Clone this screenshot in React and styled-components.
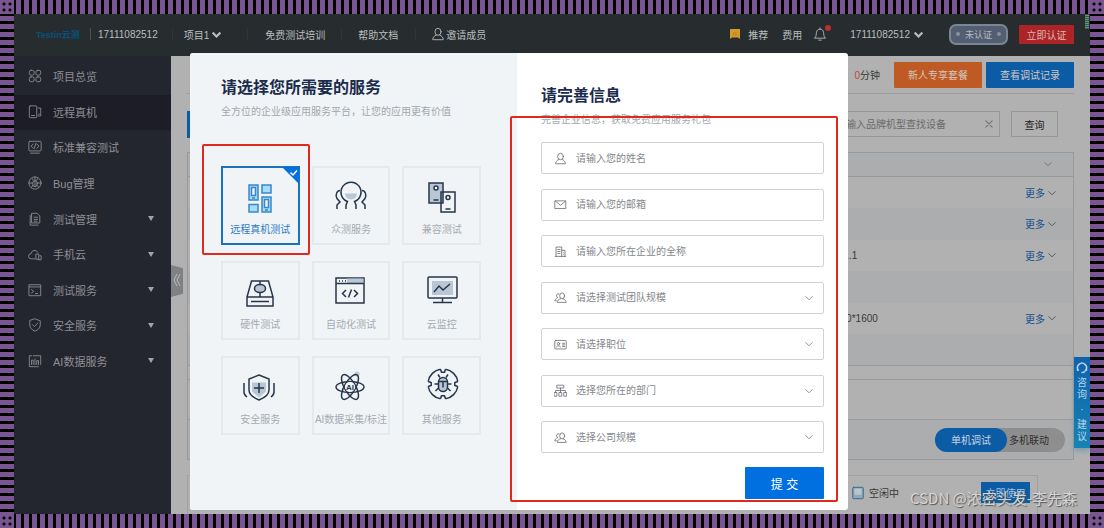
import React, { useState } from 'react'
import styled, { createGlobalStyle, css } from 'styled-components'

const primary = '#006fe0'
const navy = '#1b2b4b'
const annotation = '#e0281e'
const purple = '#7b5592'

const GlobalStyle = createGlobalStyle`
  * {
    box-sizing: border-box;
  }
  body {
    margin: 0;
    background: #000;
    font-family: "Liberation Sans", "Noto Sans CJK SC", sans-serif;
    font-size: 10px;
  }
  button, input, select {
    font-family: inherit;
    font-size: inherit;
  }
  a {
    color: inherit;
    text-decoration: none;
  }
`

const Frame = styled.div`
  position: relative;
  min-height: 100vh;
  padding: 14px;
  display: flex;
  background:
    repeating-linear-gradient(90deg, ${purple} 0 5px, #000 5px 8px) top / 100% 14px no-repeat,
    repeating-linear-gradient(90deg, ${purple} 0 5px, #000 5px 8px) bottom / 100% 14px no-repeat,
    repeating-linear-gradient(180deg, ${purple} 0 5px, #000 5px 8px);
`

const Corner = styled.span`
  position: absolute;
  width: 14px;
  height: 14px;
  ${props => props.$bottom ? 'bottom: 0;' : 'top: 0;'}
  ${props => props.$right ? 'right: 0;' : 'left: 0;'}
  background: radial-gradient(circle, #000 0 1px, transparent 2px) 1px 1px / 6px 6px ${purple};
`

const Page = styled.div`
  position: relative;
  flex: 1;
  min-width: 0;
  display: flex;
  flex-direction: column;
  overflow: hidden;
  background: #b1b1b1;
`

/* header */

const Header = styled.header`
  height: 42px;
  padding: 0 16px 0 22px;
  display: flex;
  justify-content: space-between;
  background: #272d2f;
  color: #b9bdbf;
`

const HeaderGroup = styled.div`
  display: flex;
  align-items: center;
  height: 40px;
`

const Logo = styled.a`
  width: 54px;
  color: #07507e;
  font-size: 9px;
  font-weight: bold;
`

const Divider = styled.span`
  width: 1px;
  height: 12px;
  background: ${props => props.$strong ? '#4b5153' : '#303638'};
`

const HeaderLink = styled.a`
  display: inline-flex;
  align-items: center;
  gap: ${props => props.$gap || 0}px;
  margin-left: ${props => props.$before || 0}px;
  margin-right: ${props => props.$after || 0}px;
  white-space: nowrap;
`

const Bell = styled.span`
  position: relative;
  display: flex;
`

const BellDot = styled.span`
  position: absolute;
  top: -2px;
  right: -4px;
  width: 6px;
  height: 6px;
  border-radius: 50%;
  background: #b7312f;
`

const Unverified = styled.span`
  display: flex;
  align-items: center;
  justify-content: space-between;
  width: 59px;
  height: 21px;
  margin-right: 11px;
  padding: 0 5px;
  border: 2px solid #7c8594;
  border-radius: 7px;
  background: #535e73;
  color: #b6bac2;
  font-size: 9px;
  &::before, &::after {
    content: '';
    width: 4px;
    height: 4px;
    border-radius: 50%;
    background: #8790a2;
  }
`

const VerifyButton = styled.button`
  width: 55px;
  height: 19px;
  padding: 0;
  border: 0;
  border-radius: 1px;
  background: #ad2427;
  color: #d9b5b5;
  cursor: pointer;
`

/* sidebar */

const Body = styled.div`
  flex: 1;
  display: flex;
`

const Sidebar = styled.nav`
  position: relative;
  width: 157px;
  flex: none;
  padding-top: 3px;
  background: #24262f;
`

const Menu = styled.ul`
  display: flex;
  flex-direction: column;
  height: 320px;
  margin: 0;
  padding: 0;
  list-style: none;
`

const MenuItem = styled.li`
  flex: 1;
  display: flex;
  background: ${props => props.$active ? '#1c1d26' : 'transparent'};
`

const MenuLink = styled.a`
  flex: 1;
  display: flex;
  align-items: center;
  gap: 11px;
  padding: 0 17px 1px 14px;
  color: #8d8e94;
  font-size: 11px;
`

const MenuLabel = styled.span`
  flex: 1;
`

const Caret = styled.span`
  border: 3px solid transparent;
  border-top: 5px solid #a2a3a7;
  border-bottom: 0;
`

const Collapse = styled.button`
  position: absolute;
  left: 157px;
  top: 209px;
  width: 12px;
  height: 32px;
  padding: 0;
  border: 0;
  background: #808184;
  clip-path: polygon(0 0, 100% 10%, 100% 90%, 0 100%);
  color: #b9babb;
  cursor: pointer;
`

/* dimmed page behind the dialog */

const Main = styled.main`
  flex: 1;
  min-width: 0;
  padding: 0 16px;
  display: flex;
  flex-direction: column;
  color: #38393b;
`

const TopBar = styled.div`
  display: flex;
  align-items: center;
  justify-content: flex-end;
  gap: 4px;
  height: 38px;
  border-bottom: 1px solid #9c9c9c;
`

const Remaining = styled.span`
  margin-right: 10px;
  b {
    color: #b84a35;
    font-weight: normal;
  }
`

const ActionButton = styled.button`
  width: 88px;
  height: 26px;
  padding: 0;
  border: 0;
  border-radius: 1px;
  background: ${props => props.$orange ? '#c05a24' : '#0c5ca5'};
  color: #d3c6bf;
  cursor: pointer;
`

const SearchRow = styled.div`
  display: flex;
  align-items: center;
  gap: 11px;
  height: 58px;
  padding: 2px 16px 0 0;
`

const DeviceTab = styled.button`
  width: 70px;
  height: 27px;
  margin-right: auto;
  border: 0;
  background: #0c5ca5;
`

const SearchBox = styled.div`
  display: flex;
  align-items: center;
  width: 172px;
  height: 26px;
  padding: 0 5px;
  border: 1px solid #979797;
  color: #777;
`

const SearchInput = styled.input`
  flex: 1;
  min-width: 0;
  border: 0;
  outline: none;
  background: transparent;
  &::placeholder {
    color: #6a6a6a;
    opacity: 1;
  }
`

const QueryButton = styled.button`
  width: 47px;
  height: 26px;
  padding: 0;
  border: 1px solid #979797;
  background: transparent;
  color: #222;
`

const FilterTable = styled.table`
  width: 100%;
  height: 214px;
  border: 1px solid #999;
  border-collapse: collapse;
  th, td {
    height: 31px;
    padding: 0 17px 0 0;
    font-weight: normal;
    text-align: right;
  }
  th {
    height: 24px;
    padding-right: 21px;
    border-bottom: 1px solid #999;
    background: #acadaf;
    color: #777;
  }
  td:first-child {
    padding: 0 0 0 647px;
    text-align: left;
    white-space: nowrap;
  }
  tbody tr:nth-child(even) {
    background: #acadaf;
  }
`

const More = styled.a`
  display: inline-flex;
  align-items: center;
  gap: 3px;
  color: #17528f;
`

const Strip = styled.div`
  display: flex;
  align-items: center;
  justify-content: flex-end;
  height: ${props => props.$height}px;
  padding-right: 8px;
  border: 1px solid #999;
  border-top: 0;
  background: ${props => props.$shade ? '#acadaf' : 'transparent'};
`

const ModeSwitch = styled.div`
  display: flex;
  border-radius: 12px;
  background: #8e8e8e;
`

const ModeButton = styled.button`
  width: ${props => props.$on ? 72 : 58}px;
  height: 24px;
  padding: 0 0 0 ${props => props.$on ? 0 : 2}px;
  border: 0;
  border-radius: 12px;
  background: ${props => props.$on ? '#0c5ca5' : 'transparent'};
  color: ${props => props.$on ? '#c5d4e2' : '#2f2f2f'};
  text-align: ${props => props.$on ? 'center' : 'left'};
`

const DeviceCard = styled.div`
  flex: 1;
  display: flex;
  align-items: center;
  justify-content: flex-end;
  gap: 4px;
  margin: 15px 36px 0 0;
  padding: 0 7px 5px 0;
  border: 1px solid #a1a1a1;
  border-bottom: 0;
`

const UseButton = styled.button`
  width: 49px;
  height: 21px;
  margin-left: 78px;
  padding: 0;
  border: 0;
  background: #0c5ca5;
  color: #a8c1da;
`

const Consult = styled.button`
  position: absolute;
  top: 343px;
  right: 0;
  width: 16px;
  height: 91px;
  padding: 5px 0;
  display: flex;
  flex-direction: column;
  align-items: center;
  justify-content: space-between;
  border: 0;
  background: linear-gradient(#0e62ac, #1583b5);
  box-shadow: 0 3px 5px #7f9cae;
  color: #b9d2e6;
  font-size: 10px;
  line-height: 12px;
`

const Watermark = styled.span`
  position: absolute;
  right: 13px;
  bottom: 5px;
  color: #d4d4d4;
  font-family: "Noto Sans CJK SC", sans-serif;
  font-size: 15px;
  line-height: 22px;
  text-shadow: 1px 1px 1px #555;
`

const Signal = styled.span`
  position: absolute;
  top: 0;
  right: 1px;
  width: 4px;
  height: 15px;
  background: repeating-linear-gradient(#315c4b 0 1px, #69907e 1px 2px);
`

/* dialog */

const Overlay = styled.div`
  position: absolute;
  inset: 39px 242px 4px 176px;
  display: flex;
`

const Dialog = styled.section`
  flex: 1;
  display: flex;
  border-radius: 3px;
  background: #fff;
  overflow: hidden;
`

const Services = styled.div`
  flex: 1;
  padding: 23px 36px 0 31px;
  background: #f0f4f7;
`

const Title = styled.h2`
  margin: 0;
  color: ${navy};
  font-size: 16px;
  line-height: 24px;
  white-space: nowrap;
`

const Subtitle = styled.p`
  margin: 0;
  color: #a3a7ac;
  font-size: 10px;
  line-height: 24px;
`

const ServiceGrid = styled.div`
  display: grid;
  grid-template-columns: repeat(3, 1fr);
  gap: 16px 12px;
  margin-top: 42px;
`

const cardStyles = css`
  position: relative;
  display: flex;
  flex-direction: column;
  align-items: center;
  height: 79px;
  padding: 12px 0 0;
  background: transparent;
  cursor: pointer;
`

const ServiceCard = styled.button`
  ${cardStyles}
  gap: 7px;
  border: 2px solid ${props => props.$selected ? '#1973bd' : '#e5e9ec'};
  color: ${props => props.$selected ? '#2f7cc4' : '#a6abb1'};
  white-space: nowrap;
  line-height: 14px;
`

const ServiceIcon = styled.svg`
  width: 36px;
  height: 36px;
  overflow: visible;
  color: #27364a;
`

const Tick = styled.svg`
  position: absolute;
  top: -1px;
  right: -1px;
`

const Marker = styled.span`
  position: absolute;
  inset: ${props => props.$inset};
  border: 2px solid ${annotation};
  border-radius: 2px;
  pointer-events: none;
`

const FormPanel = styled.form`
  position: relative;
  width: 331px;
  padding: 31px 24px 11px;
  display: flex;
  flex-direction: column;
`

const Fields = styled.div`
  flex: 1;
  display: flex;
  flex-direction: column;
  justify-content: space-between;
  margin: 10px 0 14px;
`

const Field = styled.label`
  display: flex;
  align-items: center;
  gap: 9px;
  height: 32px;
  padding: 0 10px 0 12px;
  border: 1px solid #cfd1d4;
  border-radius: 2px;
  color: #686c72;
`

const TextInput = styled.input`
  flex: 1;
  min-width: 0;
  padding: 0;
  border: 0;
  outline: none;
  background: transparent;
  &::placeholder {
    color: #85888c;
    opacity: 1;
  }
`

const Select = styled.select`
  flex: 1;
  min-width: 0;
  padding: 0;
  border: 0;
  outline: none;
  appearance: none;
  background: transparent;
  color: #85888c;
`

const SubmitButton = styled.button`
  align-self: flex-end;
  width: 79px;
  height: 32px;
  border: 0;
  border-radius: 1px;
  background: ${primary};
  color: #fff;
  font-size: 12px;
  cursor: pointer;
`

/* icons */

const Icon = ({ size = 14, width = 1, children }) => (
  <svg width={size} height={size} viewBox="0 0 16 16" fill="none" stroke="currentColor"
    strokeWidth={width} strokeLinecap="round" strokeLinejoin="round" aria-hidden="true">
    {children}
  </svg>
)

const Chevron = ({ size = 8, width = 1, color = 'currentColor' }) => (
  <svg width={size} height={size} viewBox="0 0 8 8" fill="none" stroke={color} strokeWidth={width} aria-hidden="true">
    <path d="M.5 2.3 4 5.8l3.5-3.5" />
  </svg>
)

const menuIcons = {
  overview: <><rect x="1.5" y="1.5" width="5.5" height="5.5" rx="2" /><rect x="9" y="1.5" width="5.5" height="5.5" rx="2" /><rect x="1.5" y="9" width="5.5" height="5.5" rx="2" /><rect x="9" y="9" width="5.5" height="5.5" rx="2" /></>,
  remote: <><rect x="1.5" y="1" width="8.5" height="13.5" rx="1" /><path d="M4 12h3.5M11.5 3.5h3v9h-3M12 10.5h1" /></>,
  compat: <><rect x="1" y="1.5" width="14" height="11" rx="1" /><path d="M3 15h10M6 4.5 3.5 7 6 9.5M10 4.5 12.5 7 10 9.5M9 4 7 10" /></>,
  bug: <><circle cx="8" cy="8" r="7" /><ellipse cx="8" cy="8.8" rx="2.6" ry="3.5" /><path d="M8 1v4.5M6 5l-1-2M10 5l1-2M5.4 8H1M10.6 8H15M5.8 10.5 4 13M10.2 10.5 12 13M8 6v6" /></>,
  manage: <><path d="M4.5 1.5h6l3 3v8h-9zM2.5 4v11h9" /><path d="M7 6h4M7 8.5h4M7 10.5h3" /></>,
  cloud: <><path d="M8 13.5H3.8a3 3 0 0 1-.3-6A4.2 4.2 0 0 1 11.3 6" /><rect x="9.5" y="8" width="2.8" height="6" /><path d="M13.5 10H15v4.5h-3" /></>,
  service: <><rect x="1.5" y="2" width="13" height="12.5" /><path d="M1.5 4.5h13M4 7.5 6.5 9.5 4 11.5M8.5 12H11" /></>,
  safe: <><path d="M8 1 14 3.2V8c0 3.5-2.8 5.8-6 7-3.2-1.2-6-3.5-6-7V3.2z" /><path d="M5.2 7.7 7.3 9.8 11 6" /></>,
  ai: <path d="M4 2H1.5v12.5H12M6 2h8.5v10M4 12V7h2v5M8 12V5.5M10 12V7.5h2V12" />
}

const menu = [
  ['overview', '项目总览'],
  ['remote', '远程真机'],
  ['compat', '标准兼容测试'],
  ['bug', 'Bug管理'],
  ['manage', '测试管理', true],
  ['cloud', '手机云', true],
  ['service', '测试服务', true],
  ['safe', '安全服务', true],
  ['ai', 'AI数据服务', true]
]

const tint = '#b9c6d6'

const serviceIcons = {
  remote: <g stroke="#3b86c8" fill="#a5dcfa"><rect x="6" y="4" width="9" height="15" /><rect x="8.5" y="6.5" width="4" height="8" fill="#f0f4f7" /><path d="M9 17h3" /><rect x="19" y="4" width="9" height="8" /><rect x="6" y="23.5" width="9" height="7.5" /><rect x="19" y="16" width="9" height="15" /><rect x="21.5" y="18.5" width="4" height="8" fill="#f0f4f7" /><path d="M22 29h3" /></g>,
  crowd: <><path d="M11 12.5h12a6 6 0 0 1-12 0" fill={tint} stroke="none" /><path d="M12 28v-4l1.5-3.5a10 10 0 1 1 7 0L22 24v4M3 28v-4l3-3-3-3.5c-2-4 0-8 3-8M31 28v-4l-3-3 3-3.5c2-4 0-8-3-8" /></>,
  compat: <><rect x="4" y="2" width="14" height="20" fill={tint} /><circle cx="11" cy="7" r="2" fill="#fff" /><path d="M8.5 19h5" /><rect x="16" y="11" width="14" height="20" /><circle cx="23" cy="16.5" r="2" /><path d="M20.5 28h5" /></>,
  hardware: <><path d="M4 21 8.5 5h17L30 21v9H4zM4 21h26M8 25.5h18M17 5v3.500M17 16v5" /><ellipse cx="17" cy="12.5" rx="5.5" ry="4" fill={tint} /></>,
  auto: <g transform="translate(-1 -2)"><rect x="3" y="4" width="28" height="25" /><path d="M14 4.5h16.5v4.5H14z" fill={tint} stroke="none" /><path d="M3 9.5h28M6 7h1M9 7h1M12 7h1M13 16l-3.5 3.5L13 23M21 16l3.5 3.5L21 23M18.5 15.5l-3 8" /></g>,
  monitor: <g transform="translate(0 -2)"><rect x="3" y="3" width="29" height="21" rx="1" /><path d="M7 7h21v14H7z" fill={tint} stroke="none" /><path d="m9 18 5-6 4 4 7-6M17.5 24v4M8 28.5h19" /></g>,
  safe: <g transform="translate(-1 0)"><path d="M10 11.5h14v9l-7 6-7-6z" fill={tint} stroke="none" /><path d="m17 4 10 4v11c0 5-5 8-10 10-5-2-10-5-10-10V8zM17 12v10M12 17h10M2 12v9q0 3 3 5M32 12v9q0 3-3 5" /></g>,
  ai: <g transform="translate(-1 -1)"><circle cx="24" cy="4" r="2.5" fill={tint} stroke="none" /><ellipse cx="17" cy="17" rx="14" ry="5.5" /><ellipse cx="17" cy="17" rx="14" ry="5.5" transform="rotate(60 17 17)" /><ellipse cx="17" cy="17" rx="14" ry="5.5" transform="rotate(120 17 17)" /><circle cx="17" cy="17" r="5" fill="#f0f4f7" stroke="none" /><text x="17" y="20" textAnchor="middle" fontSize="8" fontWeight="bold" fill="currentColor" stroke="none">AI</text></g>,
  other: <g transform="translate(1 -3)"><path d="M19.5 1.2A15 15 0 0 1 31.8 13.5M31.8 18.5A15 15 0 0 1 19.5 30.8M14.5 30.8A15 15 0 0 1 2.2 18.5M2.2 13.5A15 15 0 0 1 14.5 1.2M14.5 1.2l1 3h3l1-3M14.5 30.8l1-3h3l1 3M2.2 13.5l3 1v3l-3 1M31.8 13.5l-3 1v3l3 1" /><rect x="12.5" y="9.5" width="9" height="14" rx="4.5" fill={tint} /><path d="M12.5 13.5h9M17 13.5v6M14 9.5l-2-3M20 9.5l2-3M12.5 16H8.5M21.5 16h4M12.5 20 9.5 23M21.5 20l3 3" /></g>
}

const services = [
  ['remote', '远程真机测试'],
  ['crowd', '众测服务'],
  ['compat', '兼容测试'],
  ['hardware', '硬件测试'],
  ['auto', '自动化测试'],
  ['monitor', '云监控'],
  ['safe', '安全服务'],
  ['ai', 'AI数据采集/标注'],
  ['other', '其他服务']
]

const person = <><ellipse cx="8" cy="5.5" rx="3.5" ry="4" /><path d="M6 9.2c-2.5 1-4 2.8-4 5.3h12c0-2.5-1.5-4.3-4-5.3" /></>
const group = <><ellipse cx="10" cy="6" rx="3" ry="3.7" /><path d="M8 9.5c-2.5.8-4 2.5-4 4.5h11c0-2-1.5-3.7-4-4.5M6 3.5C3.8 3 3 4.5 3.2 6c.1 1 .6 1.7 1.3 2.2C2.5 9 1.2 10.3 1 12h2" /></>

const fields = [
  { name: 'name', text: '请输入您的姓名', icon: person },
  { name: 'email', text: '请输入您的邮箱', icon: <><rect x="1.5" y="3.5" width="13" height="9.5" /><path d="m2 4 6 5 6-5" /></> },
  { name: 'company', text: '请输入您所在企业的全称', icon: <path d="M2.5 14V2.5h7V14M9.5 6.5h4V14M1.5 14h13M4.5 5.5h3M4.5 8h3M4.5 10.5h3M11.5 9v0M11.5 11.5v0" /> },
  { name: 'team', text: '请选择测试团队规模', icon: group, select: true },
  { name: 'job', text: '请选择职位', icon: <><rect x="1" y="3" width="14" height="10.5" rx="1" /><circle cx="5.5" cy="7" r="1.5" /><path d="M3 11c.3-2 4.7-2 5 0M10.5 6.5h2.5M10.5 8.5h2.5M10.5 10.5h2.5" /></>, select: true },
  { name: 'department', text: '选择您所在的部门', icon: <path d="M4 1.5h8v3.500H4zM8 5v3M2 10.5V8h12v2.500M8 8v2.500M.5 10.5h3v4.500h-3zM6.5 10.5h3v4.500h-3zM12.5 10.5h3v4.500h-3z" />, select: true },
  { name: 'scale', text: '选择公司规模', icon: group, select: true }
]

const filterRows = [
  { value: '', more: true },
  { value: '', more: true },
  { value: '5.1.1', more: true },
  { value: '' },
  { value: '800*1600', more: true },
  { value: '' }
]

const TopHeader = () => (
  <Header>
    <HeaderGroup>
      <Logo href="#">Testin云测</Logo>
      <Divider $strong />
      <HeaderLink href="#" $before={7} $after={14}>17111082512</HeaderLink>
      <Divider />
      <HeaderLink href="#" $before={11} $after={26} $gap={3}>项目1<Chevron size={9} width={2} /></HeaderLink>
      <Divider />
      <HeaderLink href="#" $before={17} $after={16}>免费测试培训</HeaderLink>
      <Divider />
      <HeaderLink href="#" $before={16} $after={17}>帮助文档</HeaderLink>
      <Divider />
      <HeaderLink href="#" $before={15} $gap={1}><Icon>{person}</Icon>邀请成员</HeaderLink>
    </HeaderGroup>
    <HeaderGroup>
      <HeaderLink href="#" $after={14} $gap={8}>
        <svg width="10" height="10" viewBox="0 0 10 10" aria-hidden="true">
          <path d="M0 0h10v10L8 8.5H2L0 10z" fill="#d39a25" />
          <path d="M3 4h4M3 6h4" stroke="#b08428" />
        </svg>
        推荐
      </HeaderLink>
      <HeaderLink href="#" $after={11}>费用</HeaderLink>
      <Bell><Icon><path d="M2 12.5c2-1.5 1.5-4 2-6.5s2-3.5 4-3.5 3.5 1 4 3.5 0 5 2 6.5zM6.5 15h3M8 1v1" /></Icon><BellDot /></Bell>
      <HeaderLink href="#" $before={23} $after={26} $gap={4}>17111082512<Chevron size={9} width={2} /></HeaderLink>
      <Unverified>未认证</Unverified>
      <VerifyButton type="button">立即认证</VerifyButton>
    </HeaderGroup>
  </Header>
)

const SideMenu = () => (
  <Sidebar>
    <Menu>
      {menu.map(([icon, label, nested]) => (
        <MenuItem key={icon} $active={icon === 'remote'}>
          <MenuLink href="#">
            <Icon>{menuIcons[icon]}</Icon>
            <MenuLabel>{label}</MenuLabel>
            {nested && <Caret />}
          </MenuLink>
        </MenuItem>
      ))}
    </Menu>
    <Collapse type="button" aria-label="收起">
      <svg width="8" height="14" viewBox="0 0 8 14" fill="none" stroke="currentColor" aria-hidden="true">
        <path d="M4 1 1 7l3 6M7 1 4 7l3 6" />
      </svg>
    </Collapse>
  </Sidebar>
)

const DevicePage = () => (
  <Main>
    <TopBar>
      <Remaining>剩余时长 : &nbsp;<b>0</b>分钟</Remaining>
      <ActionButton type="button" $orange>新人专享套餐</ActionButton>
      <ActionButton type="button">查看调试记录</ActionButton>
    </TopBar>
    <SearchRow>
      <DeviceTab type="button" aria-label="设备" />
      <SearchBox>
        <SearchInput aria-label="查找设备" placeholder="请输入品牌机型查找设备" />
        <Icon size={10} width={2}><path d="m3 3 10 10M13 3 3 13" /></Icon>
      </SearchBox>
      <QueryButton type="button">查询</QueryButton>
    </SearchRow>
    <FilterTable>
      <thead>
        <tr><th colSpan={2}><Chevron /></th></tr>
      </thead>
      <tbody>
        {filterRows.map((row, i) => (
          <tr key={i}>
            <td>{row.value}</td>
            <td>{row.more && <More href="#">更多<Chevron color="#555b66" /></More>}</td>
          </tr>
        ))}
      </tbody>
    </FilterTable>
    <Strip $height={14} />
    <Strip $height={40} />
    <Strip $height={40} $shade>
      <ModeSwitch>
        <ModeButton type="button" $on>单机调试</ModeButton>
        <ModeButton type="button">多机联动</ModeButton>
      </ModeSwitch>
    </Strip>
    <DeviceCard>
      <Icon><rect x="2" y="1.5" width="12" height="13" rx="1" stroke="#2f6187" fill="#8fa9bb" /><path d="M4 3h8v7H4z" fill="#b9c4cb" stroke="none" /></Icon>
      空闲中
      <UseButton type="button">立即使用</UseButton>
    </DeviceCard>
  </Main>
)

const ServicePicker = () => {
  const [selected, setSelected] = useState('remote')
  return (
    <Services>
      <Title>请选择您所需要的服务</Title>
      <Subtitle>全方位的企业级应用服务平台，让您的应用更有价值</Subtitle>
      <ServiceGrid>
        {services.map(([id, label]) => (
          <ServiceCard key={id} type="button" $selected={id === selected} onClick={() => setSelected(id)}>
            <ServiceIcon viewBox="-1 -1 36 36" fill="none" stroke="currentColor" strokeWidth="1.5" aria-hidden="true">
              {serviceIcons[id]}
            </ServiceIcon>
            {label}
            {id === selected && (
              <Tick width="17" height="17" viewBox="0 0 17 17" fill="none">
                <path d="M0 0h17v17z" fill={primary} />
                <path d="m8.5 5.5 2.5 2.5 4-4.5" stroke="#fff" strokeWidth="1.5" />
              </Tick>
            )}
            {id === 'remote' && <Marker $inset="-24px -12px -12px -21px" />}
          </ServiceCard>
        ))}
      </ServiceGrid>
    </Services>
  )
}

const InfoForm = () => (
  <FormPanel onSubmit={e => e.preventDefault()}>
    <Title>请完善信息</Title>
    <Subtitle>完善企业信息，获取免费应用服务礼包</Subtitle>
    <Fields>
      {fields.map(({ name, text, icon, select }) => (
        <Field key={name}>
          <Icon size={13}>{icon}</Icon>
          {select
            ? <Select name={name} aria-label={text}><option>{text}</option></Select>
            : <TextInput name={name} aria-label={text} placeholder={text} />}
          {select && <Chevron color="#8f9296" />}
        </Field>
      ))}
    </Fields>
    <SubmitButton type="submit">提 交</SubmitButton>
    <Marker $inset="63px 10px 8px -7px" />
  </FormPanel>
)

export default function App() {
  return (
    <>
      <GlobalStyle />
      <Frame>
        <Corner />
        <Corner $right />
        <Corner $bottom />
        <Corner $bottom $right />
        <Page>
          <TopHeader />
          <Body>
            <SideMenu />
            <DevicePage />
          </Body>
          <Consult type="button">
            <Icon size={12} width={2}><path d="M3 11a6 6 0 1 1 10 0c-1 2-3 3-5 3M2 7v4M14 7v4" /></Icon>
            <span>咨<br />询</span>
            <span>·</span>
            <span>建<br />议</span>
          </Consult>
          <Signal />
          <Overlay>
            <Dialog role="dialog" aria-label="请完善信息">
              <ServicePicker />
              <InfoForm />
            </Dialog>
          </Overlay>
          <Watermark>CSDN @浓密头发-李先森</Watermark>
        </Page>
      </Frame>
    </>
  )
}
